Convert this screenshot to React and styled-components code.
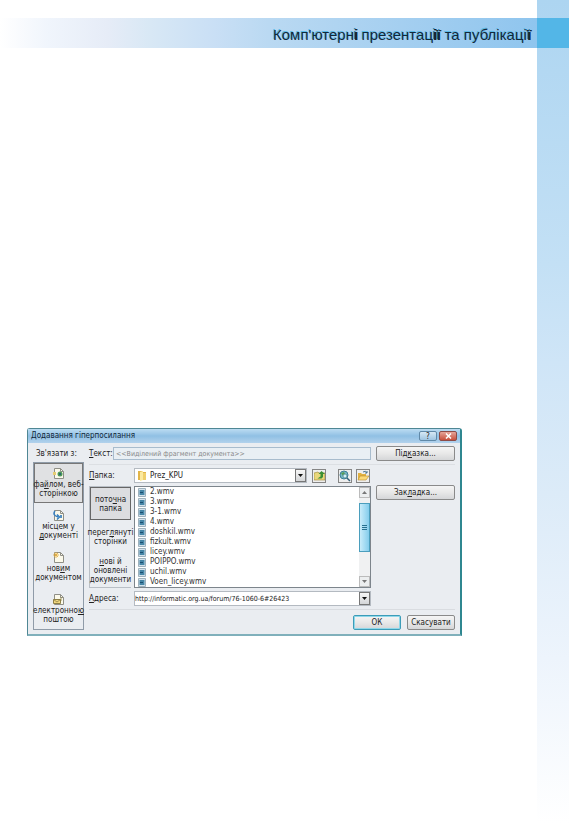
import React, { useState } from "react";
import styled, { css, createGlobalStyle } from "styled-components";

const GlobalStyle = createGlobalStyle`
  * {
    box-sizing: border-box;
  }
  body {
    margin: 0;
    background: #fff;
  }
`;

const Page = styled.div`
  min-height: 100vh;
  display: flex;
  flex-direction: column;
  padding-top: 18px;
  background: linear-gradient(#add5f1, #c3e0f5 32%, #cfe5f7 44%, #dcebf8 60%, #edf4fc 80%, #fff)
    right / 32px 100% no-repeat;
`;

const Header = styled.header`
  display: flex;
  height: 30px;
`;

const Band = styled.div`
  flex: 1;
  display: flex;
  align-items: center;
  justify-content: flex-end;
  padding: 4px 6px 0 0;
  background: linear-gradient(to right, #fff, #f0f5fc 9%, #e6ecf7 20%, #d8e8f5 28%, #c9dff5 40%, #bad9f2 50%, #8fc5ee);
`;

const Corner = styled.div`
  width: 32px;
  background: #53b6e7;
`;

const Heading = styled.h1`
  margin: 0;
  font: 15px/20px "Liberation Sans", sans-serif;
  color: #12283a;
  text-shadow: -1px -1px 0 #5cbbe9;
  white-space: nowrap;
`;

const Heavy = styled.span`
  color: #0a1a26;
  text-shadow: 1px 0 0 #0a1a26, -1px -1px 0 #2f7fa8;
`;

const Main = styled.main`
  padding: 380px 107px 0 27px;
`;

const Dialog = styled.section`
  border: 1px solid #4f8794;
  border-right: 2px solid #2f8790;
  border-bottom: 2px solid #80b0bb;
  border-radius: 3px 3px 0 0;
  background: #eaedf1;
  color: #222;
  font: 8px/10px "DejaVu Sans Condensed", "DejaVu Sans", sans-serif;

  button,
  input,
  select {
    font: inherit;
    color: inherit;
  }
`;

const TitleBar = styled.div`
  display: flex;
  align-items: center;
  height: 14px;
  padding: 0 3px;
  background: linear-gradient(#bcdcf2, #90c0e4 50%, #b2d2ec);
`;

const Title = styled.h2`
  flex: 1;
  margin: 0;
  font: inherit;
  color: #102638;
`;

const WindowButton = styled.button`
  width: 18px;
  height: 10px;
  padding: 0;
  display: grid;
  place-items: center;
  border: 1px solid #6089a8;
  border-radius: 2px;
  background: linear-gradient(#d6e8f5, #9fc5e2);

  ${({ $close }) =>
    $close &&
    css`
      margin-left: 2px;
      border-color: #8d4b47;
      background: linear-gradient(#e5a59a, #c84f3c);
    `}
`;

const Body = styled.div`
  display: grid;
  grid-template-columns: 51px minmax(0, 1fr);
  gap: 5px;
  padding: 3px 5px 4px;
`;

const LinkColumn = styled.div`
  display: flex;
  flex-direction: column;
`;

const ColumnLabel = styled.div`
  height: 16px;
  padding: 3px 3px 0;
  white-space: nowrap;
`;

const LinkBar = styled.div`
  flex: 1;
  display: flex;
  flex-direction: column;
  justify-content: space-between;
  border: 1px solid #8f9ba8;
`;

const LinkButton = styled.button`
  height: 40px;
  padding: 0;
  display: flex;
  flex-direction: column;
  align-items: center;
  justify-content: center;
  border: 1px solid ${({ $active }) => ($active ? "#777" : "transparent")};
  background: ${({ $active }) => ($active ? "#e0e1e3" : "none")};
  white-space: nowrap;

  &&& {
    line-height: 9px;
  }

  svg {
    margin-bottom: 1px;
  }
`;

const Content = styled.div`
  display: flex;
  flex-direction: column;
`;

const Row = styled.div`
  display: flex;
  align-items: center;
  gap: 5px;
`;

const TextRow = styled(Row)`
  padding-bottom: 3px;
  border-bottom: 1px solid #dcdfe3;
`;

const Fields = styled.div`
  flex: 1;
  min-width: 0;
  display: flex;
  flex-direction: column;
  gap: 3px;
`;

const FieldsArea = styled.div`
  display: flex;
  gap: 5px;
  padding: 3px 0;
  border-bottom: 1px solid #d9dce0;
`;

const Label = styled.label`
  width: ${({ $short }) => ($short ? "19px" : "40px")};
  flex: none;
  white-space: nowrap;
`;

const TextField = styled.input`
  flex: 1;
  min-width: 0;
  height: 13px;
  padding: 0 2px;
  border: 1px solid #a8bccd;
  background: #e9eff4;

  &&:disabled {
    color: #888;
    font-size: 7px;
  }
`;

const Combo = styled.div`
  flex: 1;
  min-width: 0;
  height: 15px;
  display: flex;
  align-items: center;
  border: 1px solid #b4bac1;
  background: #fff;

  > svg {
    margin-left: 3px;
  }
`;

const FolderSelect = styled.select`
  flex: 1;
  min-width: 0;
  padding: 0 3px;
  border: 0;
  appearance: none;
  background: none;
`;

const AddressInput = styled.input`
  flex: 1;
  min-width: 0;
  padding: 0;
  border: 0;
  background: none;

  &&& {
    font-size: 7px;
  }
`;

const DropButton = styled.button`
  width: 11px;
  height: 13px;
  padding: 0;
  display: grid;
  place-items: center;
  border: 1px solid #777;
  background: linear-gradient(#f6f6f6, #d4d6d8);
`;

const ToolButton = styled.button`
  width: 14px;
  height: 14px;
  padding: 0;
  display: grid;
  place-items: center;
  border: 1px solid #858585;
  background: #eee;
`;

const Tools = styled.div`
  display: flex;
  gap: 4px;
  padding: 0 1px 0 7px;
`;

const Browser = styled.div`
  display: flex;
  gap: 3px;
  height: 102px;
`;

const Tabs = styled.div`
  width: 42px;
  flex: none;
  display: flex;
  flex-direction: column;
  border: 1px solid #b9bfc6;
  border-right: 0;
`;

const Tab = styled.button`
  flex: 1;
  padding: 0;
  border: 1px solid ${({ $active }) => ($active ? "#666" : "transparent")};
  background: ${({ $active }) => ($active ? "#dcdde0" : "none")};
  display: flex;
  flex-direction: column;
  align-items: center;
  justify-content: center;
  white-space: nowrap;

  &&& {
    line-height: 9px;
  }
`;

const FileBox = styled.div`
  flex: 1;
  min-width: 0;
  display: flex;
  border: 1px solid #7d858c;
  background: #fff;
`;

const FileList = styled.ul`
  flex: 1;
  margin: 0;
  padding: 0 3px;
  list-style: none;
  overflow: hidden;
`;

const FileItem = styled.li`
  display: flex;
  align-items: center;
  gap: 4px;
  height: 10px;
  color: #333;
`;

const ScrollBar = styled.div`
  width: 11px;
  display: flex;
  flex-direction: column;
  background: #f0f1f2;
`;

const ScrollButton = styled.button`
  height: 11px;
  padding: 0;
  display: grid;
  place-items: center;
  border: 1px solid #bbb;
  background: #eceeef;
`;

const Track = styled.div`
  flex: 1;
  padding: 5px 0 24px;
  display: flex;
`;

const Thumb = styled.div`
  flex: 1;
  display: grid;
  place-items: center;
  border: 1px solid #4b9ebd;
  background: linear-gradient(to right, #c9ecfa, #84cdec);
`;

const SideButtons = styled.div`
  width: 79px;
  flex: none;
  padding-top: 17px;
`;

const PushButton = styled.button`
  width: ${({ $wide }) => ($wide ? "79px" : "48px")};
  height: 15px;
  padding: 0;
  border: 1px solid ${({ $primary }) => ($primary ? "#3c9cb8" : "#8a8a8a")};
  border-radius: 2px;
  background: linear-gradient(#f5f5f5, #e8e8e8 50%, #d5d6d8);
  ${({ $primary }) => $primary && css`box-shadow: inset 0 0 0 1px #8fd8ea;`}
`;

const Footer = styled.div`
  display: flex;
  justify-content: flex-end;
  gap: 6px;
  padding-top: 5px;
`;

const Arrow = ({ up, light }) => (
  <svg width="5" height="3" viewBox="0 0 5 3" aria-hidden="true">
    <path d={up ? "M0 3h5L2.5 0z" : "M0 0h5L2.5 3z"} fill={light ? "#777" : "#111"} />
  </svg>
);

const FolderIcon = () => (
  <svg width="9" height="11" viewBox="0 0 9 11" aria-hidden="true">
    <path d="M0 1h4l1 1h3v8H0z" fill="#e2b548" />
    <path d="M2 2l3-1v9L2 11z" fill="#fbe9a0" />
    <path d="M5 3h3v7H5z" fill="#f0cf6c" />
  </svg>
);

const FileIcon = () => (
  <svg width="8" height="9" viewBox="0 0 8 9" aria-hidden="true">
    <path d="M.5.5h7v8h-7z" fill="#d5e3ec" stroke="#9db1bd" />
    <path d="M1.500 2h5v5h-5z" fill="#4585a6" />
    <path d="M2 4h3v1H2z" fill="#1c4f70" />
  </svg>
);

const UpIcon = () => (
  <svg width="11" height="10" viewBox="0 0 11 10" aria-hidden="true">
    <path d="M0 2l4-1 1 1h6v7H0z" fill="#e9d77b" stroke="#9a8231" strokeWidth=".6" />
    <path d="M7.500 0L4.500 3h2v2.500l-3 2h4l1.500-1.500V3h2z" fill="#3b8f35" />
  </svg>
);

const SearchWebIcon = () => (
  <svg width="12" height="12" viewBox="0 0 12 12" aria-hidden="true">
    <circle cx="5" cy="5" r="4" fill="#78b9c4" stroke="#3d7f98" />
    <path d="M2 3l3-1 1 2-2 2zM6 6l2-1-1 3z" fill="#579d56" />
    <circle cx="6" cy="6" r="2" fill="#d5f1f5" stroke="#467c92" strokeWidth=".7" />
    <path d="M8 8l3 3" stroke="#355f79" strokeWidth="1.500" />
  </svg>
);

const OpenIcon = () => (
  <svg width="12" height="11" viewBox="0 0 12 11" aria-hidden="true">
    <path d="M1 3h3l1 1h4v6H1z" fill="#e2b13f" />
    <path d="M3 6h9l-3 4H1z" fill="#fbd978" stroke="#b98b2c" strokeWidth=".6" />
    <path d="M6 2q3-2 4 1M10 1v2H8" fill="none" stroke="#4c7590" />
  </svg>
);

const PageShape = ({ children }) => (
  <svg width="12" height="11" viewBox="0 0 12 11" aria-hidden="true">
    <path d="M1.500.5h6l3 3v7h-9z" fill="#fbf9ea" stroke="#8f8f87" />
    <path d="M7.500.5v3h3" fill="none" stroke="#8f8f87" />
    {children}
  </svg>
);

const WebPageIcon = () => (
  <PageShape>
    <circle cx="7" cy="6" r="2.500" fill="#4c9a57" />
    <circle cx="7" cy="6" r="1" fill="#294f80" />
    <path d="M0 4h3v3H0z" fill="#e6cd72" />
  </PageShape>
);

const PlaceIcon = () => (
  <PageShape>
    <path d="M2 1q-3 4 3 6M4 4.500L6.500 7 4 9.500" fill="none" stroke="#377fc0" strokeWidth="1.500" />
    <path d="M7 5h2v3H7z" fill="#5590c4" />
  </PageShape>
);

const NewIcon = () => (
  <PageShape>
    <path d="M3 0v6M0 3h6M1 1l4 4M5 1L1 5" stroke="#e3aa35" strokeWidth=".8" />
  </PageShape>
);

const MailIcon = () => (
  <PageShape>
    <path d="M.5 5.500h7v4h-7z" fill="#f1d981" stroke="#8e8047" />
    <path d="M.5 5.500L4 8l3.500-2.500M8 3v4" fill="none" stroke="#8e8047" strokeWidth=".8" />
  </PageShape>
);

const LINKS = [
  { id: "file", icon: <WebPageIcon />, lines: [<>фа<u>й</u>лом, веб-</>, "сторінкою"] },
  { id: "place", icon: <PlaceIcon />, lines: ["місцем у", <><u>д</u>окументі</>] },
  { id: "new", icon: <NewIcon />, lines: [<>нов<u>и</u>м</>, "документом"] },
  { id: "mail", icon: <MailIcon />, lines: [<>електронно<u>ю</u></>, "поштою"] },
];

const TABS = [
  { id: "current", lines: [<>пото<u>ч</u>на</>, "папка"] },
  { id: "viewed", lines: [<>перег<u>л</u>януті</>, "сторінки"] },
  { id: "recent", lines: [<><u>н</u>ові й</>, "оновлені", "документи"] },
];

const FILES = [
  "2.wmv",
  "3.wmv",
  "3-1.wmv",
  "4.wmv",
  "doshkil.wmv",
  "fizkult.wmv",
  "licey.wmv",
  "POIPPO.wmv",
  "uchil.wmv",
  "Voen_licey.wmv",
];

const renderLines = (lines) => lines.map((line, i) => <span key={i}>{line}</span>);

function HyperlinkDialog() {
  const [link, setLink] = useState("file");
  const [tab, setTab] = useState("current");
  const [address, setAddress] = useState("http://informatic.org.ua/forum/76-1060-6#26423");

  return (
    <Dialog aria-labelledby="dialog-title">
      <TitleBar>
        <Title id="dialog-title">Додавання гіперпосилання</Title>
        <WindowButton>?</WindowButton>
        <WindowButton $close aria-label="Закрити">
          <svg width="7" height="6" viewBox="0 0 7 6" aria-hidden="true">
            <path d="M1 .5l5 5M6 .5l-5 5" stroke="#fff" strokeWidth="1.500" />
          </svg>
        </WindowButton>
      </TitleBar>
      <Body>
        <LinkColumn>
          <ColumnLabel>Зв'язати з:</ColumnLabel>
          <LinkBar>
            {LINKS.map(({ id, icon, lines }) => (
              <LinkButton key={id} $active={link === id} onClick={() => setLink(id)}>
                {icon}
                {renderLines(lines)}
              </LinkButton>
            ))}
          </LinkBar>
        </LinkColumn>
        <Content>
          <TextRow>
            <Label $short htmlFor="text"><u>Т</u>екст:</Label>
            <TextField id="text" disabled value="<<Виділений фрагмент документа>>" />
            <PushButton $wide>Під<u>к</u>азка...</PushButton>
          </TextRow>
          <FieldsArea>
            <Fields>
              <Row>
                <Label htmlFor="folder"><u>П</u>апка:</Label>
                <Combo>
                  <FolderIcon />
                  <FolderSelect id="folder">
                    <option>Prez_KPU</option>
                  </FolderSelect>
                  <DropButton aria-label="Папка"><Arrow /></DropButton>
                </Combo>
                <ToolButton aria-label="Вгору"><UpIcon /></ToolButton>
                <Tools>
                  <ToolButton aria-label="Інтернет"><SearchWebIcon /></ToolButton>
                  <ToolButton aria-label="Огляд"><OpenIcon /></ToolButton>
                </Tools>
              </Row>
              <Browser>
                <Tabs>
                  {TABS.map(({ id, lines }) => (
                    <Tab key={id} $active={tab === id} onClick={() => setTab(id)}>
                      {renderLines(lines)}
                    </Tab>
                  ))}
                </Tabs>
                <FileBox>
                  <FileList>
                    {FILES.map((name) => (
                      <FileItem key={name}><FileIcon />{name}</FileItem>
                    ))}
                  </FileList>
                  <ScrollBar>
                    <ScrollButton aria-label="Вище"><Arrow up light /></ScrollButton>
                    <Track>
                      <Thumb>
                        <svg width="5" height="6" viewBox="0 0 5 6" aria-hidden="true">
                          <path d="M0 .5h5M0 2.500h5M0 4.500h5" stroke="#28718f" />
                        </svg>
                      </Thumb>
                    </Track>
                    <ScrollButton aria-label="Нижче"><Arrow light /></ScrollButton>
                  </ScrollBar>
                </FileBox>
              </Browser>
              <Row>
                <Label htmlFor="address"><u>А</u>дреса:</Label>
                <Combo>
                  <AddressInput id="address" value={address} onChange={(e) => setAddress(e.target.value)} />
                  <DropButton aria-label="Адреса"><Arrow /></DropButton>
                </Combo>
              </Row>
            </Fields>
            <SideButtons>
              <PushButton $wide>Зак<u>л</u>адка...</PushButton>
            </SideButtons>
          </FieldsArea>
          <Footer>
            <PushButton $primary>ОК</PushButton>
            <PushButton>Скасувати</PushButton>
          </Footer>
        </Content>
      </Body>
    </Dialog>
  );
}

export default function App() {
  return (
    <>
      <GlobalStyle />
      <Page>
        <Header>
          <Band>
            <Heading>
              Комп'ютерн<Heavy>і</Heavy> презентац<Heavy>ії</Heavy> та публікаці<Heavy>ї</Heavy>
            </Heading>
          </Band>
          <Corner />
        </Header>
        <Main>
          <HyperlinkDialog />
        </Main>
      </Page>
    </>
  );
}
